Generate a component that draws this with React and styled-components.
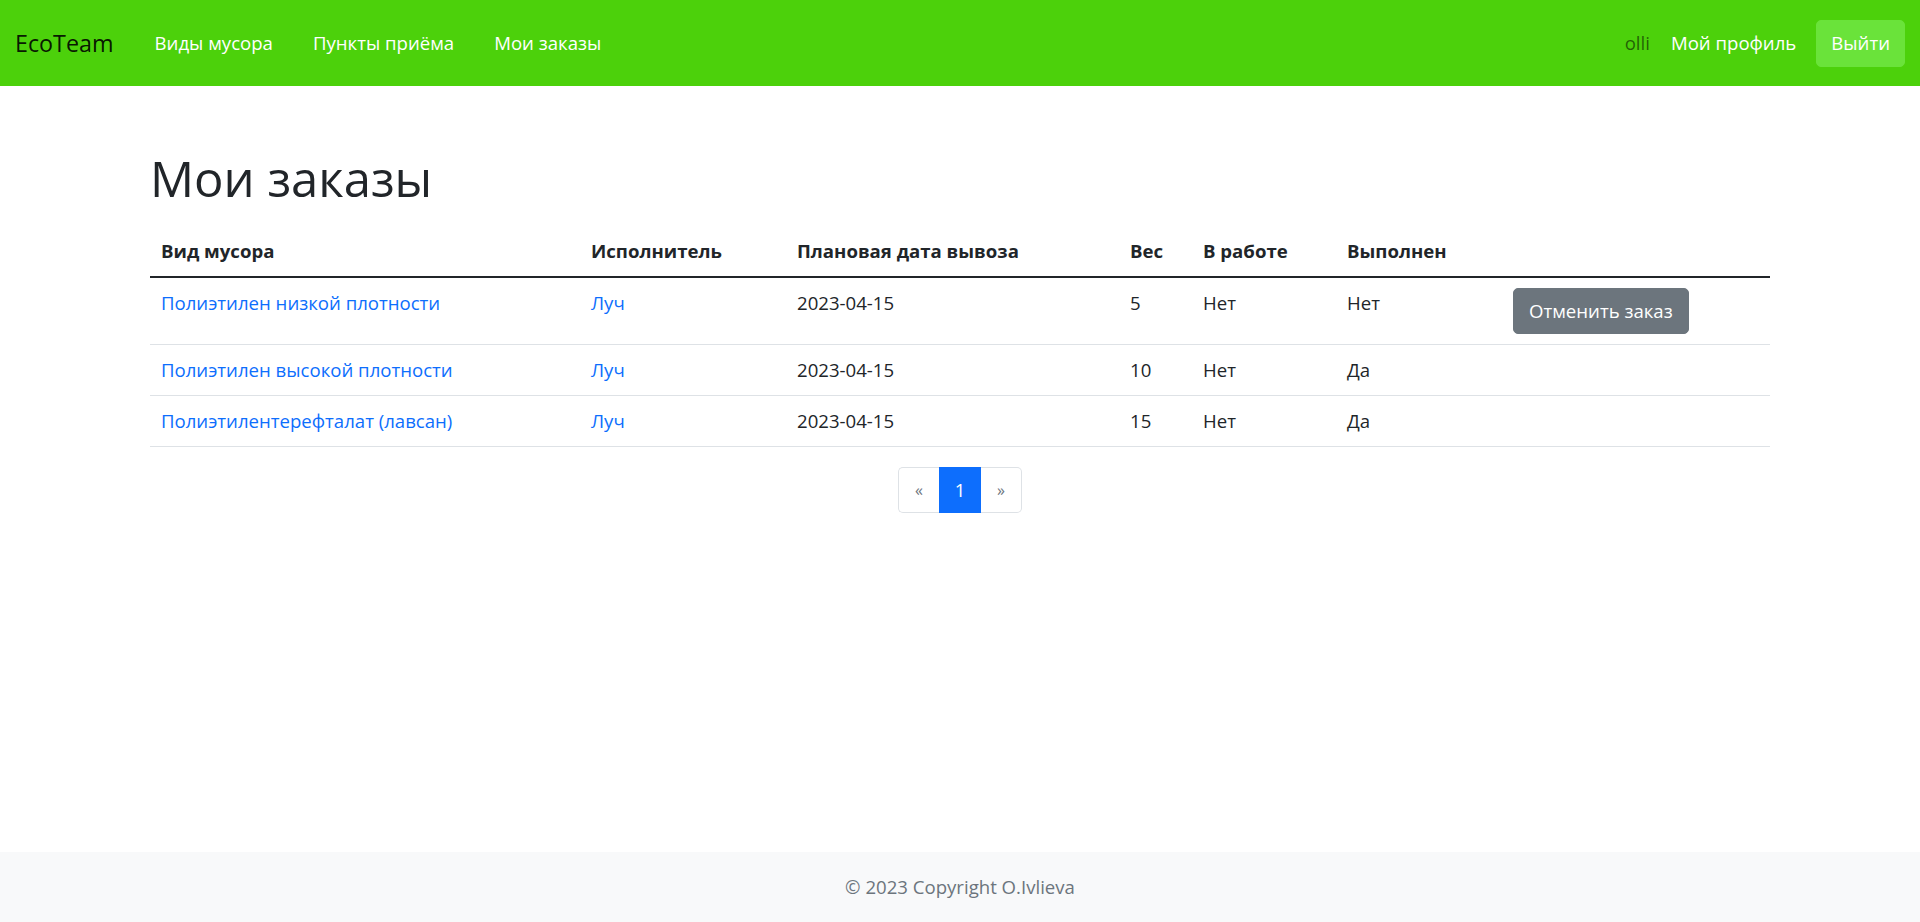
import React from "react";
import styled, { createGlobalStyle } from "styled-components";

const GlobalStyle = createGlobalStyle`
  * {
    box-sizing: border-box;
  }
  body {
    margin: 0;
    font-family: "Open Sans", "Noto Sans", sans-serif;
    font-size: 18.6px;
    line-height: 30px;
    color: #212529;
    background: #fff;
  }
`;

const Page = styled.div`
  min-height: 100vh;
  display: flex;
  flex-direction: column;
`;

const Navbar = styled.nav`
  height: 86px;
  padding: 0 15px;
  display: flex;
  align-items: center;
  background: #4cd10b;
`;

const Brand = styled.a`
  font-size: 23.3px;
  color: rgba(0, 0, 0, 0.9);
  margin-right: 19px;
  text-decoration: none;
`;

const NavList = styled.div`
  display: flex;
  align-items: center;
  flex: 1;
`;

const NavLink = styled.a`
  padding: 0 20px;
  color: #fff;
  text-decoration: none;
  &:first-child {
    padding-left: 22px;
  }
`;

const UserBox = styled.div`
  display: flex;
  align-items: center;
`;

const UserName = styled.span`
  color: rgba(0, 0, 0, 0.55);
  margin-right: 21px;
`;

const ProfileLink = styled.a`
  color: #fff;
  text-decoration: none;
  margin-right: 20px;
`;

const LogoutButton = styled.button`
  height: 47px;
  padding: 0 14px;
  font: inherit;
  color: #fff;
  background: #6ae33a;
  border: 1px solid #6ae33a;
  border-radius: 5px;
  cursor: pointer;
`;

const Container = styled.main`
  width: 1650px;
  margin: 0 auto;
  padding: 0 15px;
`;

const Title = styled.h1`
  font-size: 49px;
  font-weight: 500;
  line-height: 58px;
  margin: 63px 0 19px;
`;

const Table = styled.table`
  width: 100%;
  border-collapse: collapse;
  table-layout: fixed;
  margin-bottom: 20px;
  vertical-align: top;
`;

const HeadCell = styled.th`
  text-align: left;
  font-weight: 700;
  padding: 10px 11px;
  border-bottom: 2px solid #212529;
`;

const Cell = styled.td`
  padding: 10px 11px;
  border-bottom: 1px solid #dee2e6;
  vertical-align: top;
`;

const TextLink = styled.a`
  color: #0d6efd;
  text-decoration: none;
`;

const CancelButton = styled.button`
  height: 46px;
  padding: 0 15px;
  font: inherit;
  color: #fff;
  background: #6c757d;
  border: 1px solid #6c757d;
  border-radius: 5px;
  cursor: pointer;
`;

const Pagination = styled.ul`
  display: flex;
  justify-content: center;
  list-style: none;
  margin: 0;
  padding: 0;
`;

const PageItem = styled.li`
  width: ${(p) => p.$w}px;
  height: 46px;
  display: flex;
  align-items: center;
  justify-content: center;
  color: ${(p) => (p.$active ? "#fff" : "#6c757d")};
  background: ${(p) => (p.$active ? "#0d6efd" : "#fff")};
  border: 1px solid ${(p) => (p.$active ? "#0d6efd" : "#dee2e6")};
  font-size: ${(p) => (p.$active ? "18.6px" : "16px")};
  &:first-child {
    border-radius: 5px 0 0 5px;
    border-right: none;
  }
  &:last-child {
    border-radius: 0 5px 5px 0;
    border-left: none;
  }
`;

const Footer = styled.footer`
  margin-top: auto;
  padding: 20px 0;
  background: #f8f9fa;
  color: #6c757d;
  text-align: center;
`;

const columns = [
  ["Вид мусора", 430],
  ["Исполнитель", 206],
  ["Плановая дата вывоза", 333],
  ["Вес", 73],
  ["В работе", 144],
  ["Выполнен", 166],
  ["", 268],
];

const orders = [
  { kind: "Полиэтилен низкой плотности", who: "Луч", date: "2023-04-15", weight: 5, work: "Нет", done: "Нет", cancel: true },
  { kind: "Полиэтилен высокой плотности", who: "Луч", date: "2023-04-15", weight: 10, work: "Нет", done: "Да" },
  { kind: "Полиэтилентерефталат (лавсан)", who: "Луч", date: "2023-04-15", weight: 15, work: "Нет", done: "Да" },
];

export default function App() {
  return (
    <Page>
      <GlobalStyle />
      <Navbar>
        <Brand href="#">EcoTeam</Brand>
        <NavList>
          <NavLink href="#">Виды мусора</NavLink>
          <NavLink href="#">Пункты приёма</NavLink>
          <NavLink href="#">Мои заказы</NavLink>
        </NavList>
        <UserBox>
          <UserName>olli</UserName>
          <ProfileLink href="#">Мой профиль</ProfileLink>
          <LogoutButton>Выйти</LogoutButton>
        </UserBox>
      </Navbar>
      <Container>
        <Title>Мои заказы</Title>
        <Table>
          <colgroup>
            {columns.map(([name, w], i) => (
              <col key={i} style={{ width: w }} />
            ))}
          </colgroup>
          <thead>
            <tr>
              {columns.map(([name], i) => (
                <HeadCell key={i}>{name}</HeadCell>
              ))}
            </tr>
          </thead>
          <tbody>
            {orders.map((o, i) => (
              <tr key={i}>
                <Cell>
                  <TextLink href="#">{o.kind}</TextLink>
                </Cell>
                <Cell>
                  <TextLink href="#">{o.who}</TextLink>
                </Cell>
                <Cell>{o.date}</Cell>
                <Cell>{o.weight}</Cell>
                <Cell>{o.work}</Cell>
                <Cell>{o.done}</Cell>
                <Cell>{o.cancel && <CancelButton>Отменить заказ</CancelButton>}</Cell>
              </tr>
            ))}
          </tbody>
        </Table>
        <Pagination>
          <PageItem $w={41}>«</PageItem>
          <PageItem $w={42} $active>1</PageItem>
          <PageItem $w={41}>»</PageItem>
        </Pagination>
      </Container>
      <Footer>© 2023 Copyright O.Ivlieva</Footer>
    </Page>
  );
}
